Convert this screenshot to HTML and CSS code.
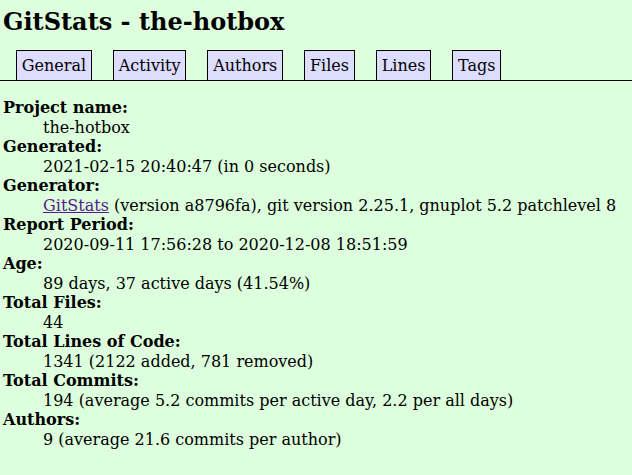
FILE: index.html
```html
<!DOCTYPE html>
<html>
<head>
<meta charset="utf-8">
<title>GitStats - the-hotbox</title>
<link rel="stylesheet" href="styles.css">
</head>
<body>
<h1 class="title">GitStats - the-hotbox</h1>
<div class="nav">
<ul>
<li><a href="#">General</a></li>
<li><a href="#">Activity</a></li>
<li><a href="#">Authors</a></li>
<li><a href="#">Files</a></li>
<li><a href="#">Lines</a></li>
<li><a href="#">Tags</a></li>
</ul>
</div>
<dl class="info">
<dt>Project name:</dt><dd>the-hotbox</dd>
<dt>Generated:</dt><dd>2021-02-15 20:40:47 (in 0 seconds)</dd>
<dt>Generator:</dt><dd><a class="link" href="#">GitStats</a> (version a8796fa), git version 2.25.1, gnuplot 5.2 patchlevel 8</dd>
<dt>Report Period:</dt><dd>2020-09-11 17:56:28 to 2020-12-08 18:51:59</dd>
<dt>Age:</dt><dd>89 days, 37 active days (41.54%)</dd>
<dt>Total Files:</dt><dd>44</dd>
<dt>Total Lines of Code:</dt><dd>1341 (2122 added, 781 removed)</dd>
<dt>Total Commits:</dt><dd>194 (average 5.2 commits per active day, 2.2 per all days)</dd>
<dt>Authors:</dt><dd>9 (average 21.6 commits per author)</dd>
</dl>
</body>
</html>
```

FILE: styles.css
```css
html, body {
  margin: 0;
  padding: 0;
}
body {
  color: black;
  background-color: #dfd;
  font-family: "DejaVu Serif", serif;
  font-size: 16px;
  padding: 0 0 0 3px;
  min-height: 475px;
  box-sizing: border-box;
  overflow: hidden;
}
.title {
  font-size: 24px;
  font-weight: bold;
  margin: 7px 0 0 0;
  height: 41px;
}
.nav {
  height: 24px;
  padding-top: 8px;
  border-bottom: 1px solid black;
  margin-left: -3px;
}
.nav ul {
  list-style-type: none;
  display: inline;
  margin: 0;
  padding: 0;
}
.nav li {
  display: inline;
}
.nav li a {
  padding: 0.3em;
  text-decoration: none;
  color: black;
  border: 1px solid black;
  margin: 0.5em;
  background-color: #ddf;
}
.nav li:first-child a {
  margin-left: 16px;
}
.info {
  margin: 17px 0 0 0;
  line-height: 19.5px;
}
.info dt {
  font-weight: bold;
}
.info dd {
  margin-left: 40px;
}
.link {
  color: #551a8b;
}
```
